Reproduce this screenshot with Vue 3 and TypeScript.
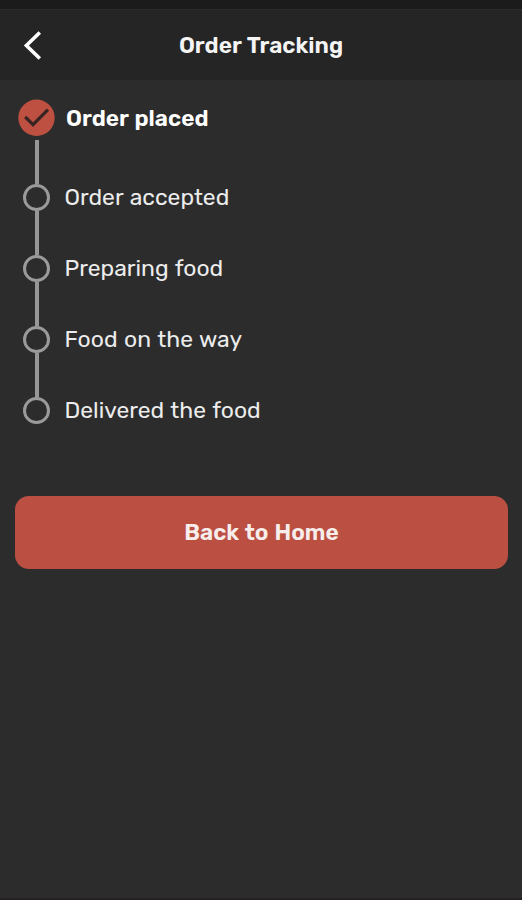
<script setup lang="ts">
interface Step {
  id: string
  label: string
  done: boolean
}

const steps: Step[] = [
  { id: 'placed', label: 'Order placed', done: true },
  { id: 'accepted', label: 'Order accepted', done: false },
  { id: 'preparing', label: 'Preparing food', done: false },
  { id: 'transit', label: 'Food on the way', done: false },
  { id: 'delivered', label: 'Delivered the food', done: false },
]
</script>

<template>
  <main class="screen">
    <div class="status-bar"></div>
    <header class="header">
      <button class="back" type="button" aria-label="Back">
        <svg width="24" height="36" viewBox="0 0 24 36">
          <path d="M19.8 5.5 L6.4 18.5 L19.8 31.5" />
        </svg>
      </button>
      <h1 class="title">Order Tracking</h1>
    </header>

    <ol class="steps">
      <li v-for="step in steps" :key="step.id" :class="['step', step.id, { done: step.done }]">
        <div class="track">
          <svg v-if="step.done" class="check" width="37" height="37" viewBox="0 0 37 37">
            <circle cx="18.5" cy="18.8" r="18.2" />
            <path d="M7.2 17.8 L15 25.6 L30 10.6" />
          </svg>
          <span v-else class="ring"></span>
          <span class="line"></span>
        </div>
        <span class="label">{{ step.label }}</span>
      </li>
    </ol>

    <button class="home" type="button">Back to Home</button>
  </main>
</template>

<style>
body {
  background: #2c2c2c;
}
</style>

<style scoped>
.screen {
  box-sizing: border-box;
  height: 900px;
  display: flex;
  flex-direction: column;
  overflow: hidden;
  background: #2c2c2c;
  border-bottom: 2px solid #242023;
  color: #ececec;
  font-family: Rubik, Roboto, sans-serif;
}
.status-bar {
  height: 9px;
  flex: none;
  background: #1b1b1b;
}
.header {
  box-sizing: border-box;
  height: 71px;
  flex: none;
  display: grid;
  grid-template-columns: 60px 1fr 60px;
  align-items: center;
  border-top: 1px solid #2b2b2b;
  background: #252525;
}
.back {
  display: flex;
  margin: 0;
  padding: 0 0 0 20px;
  border: 0;
  background: none;
}
.back path {
  fill: none;
  stroke: #fff;
  stroke-width: 3.6;
}
.title {
  margin: 0;
  padding-top: 2px;
  text-align: center;
  font-size: 22.7px;
  line-height: 30px;
  font-weight: 600;
  word-spacing: 1px;
  color: #f4f4f4;
}
.steps {
  list-style: none;
  margin: 0;
  padding: 19px 18px 0;
}
.step {
  height: 71px;
  display: grid;
  grid-template-columns: 37px 1fr;
  column-gap: 9.5px;
}
.step.done {
  height: 85px;
  column-gap: 11px;
}
.track {
  display: flex;
  flex-direction: column;
  align-items: center;
}
.check {
  flex: none;
  margin-bottom: 4px;
}
.check circle {
  fill: #be5041;
}
.check path {
  fill: none;
  stroke: #382522;
  stroke-width: 3.3;
}
.ring {
  box-sizing: border-box;
  width: 27px;
  height: 27px;
  flex: none;
  border: 3px solid #9a9a9a;
  border-radius: 50%;
}
.line {
  width: 4px;
  flex: 1;
  background: #979797;
}
.step:last-child {
  height: 27px;
}
.step:last-child .line {
  display: none;
}
.label {
  height: 27px;
  line-height: 27px;
  font-size: 22.9px;
  font-weight: 430;
  word-spacing: 1px;
  white-space: nowrap;
}
.done .label {
  height: 37px;
  line-height: 39px;
  font-size: 22.7px;
  font-weight: 600;
  color: #fff;
}
.home {
  height: 73px;
  flex: none;
  margin: 72px 14px 0 15px;
  padding: 0;
  border: 0;
  border-radius: 14px;
  background: #bb5042;
  color: #f7eeec;
  font: 600 22.7px/30px Rubik, Roboto, sans-serif;
  word-spacing: 1px;
}
</style>
